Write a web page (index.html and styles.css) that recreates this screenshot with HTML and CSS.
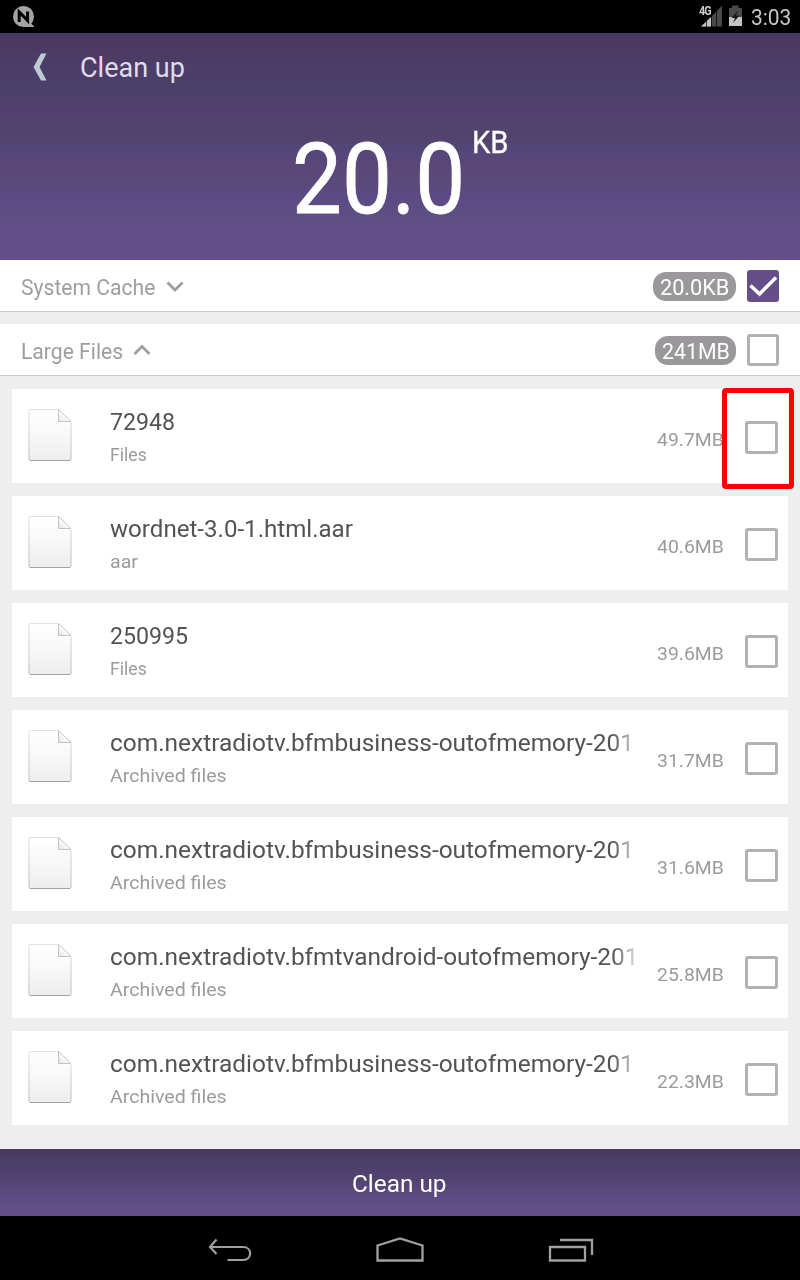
FILE: index.html
```
<!DOCTYPE html>
<html lang="en">
<head>
<meta charset="utf-8">
<title>Clean up</title>
<link rel="stylesheet" href="styles.css">
</head>
<body>
<svg class="defs" width="0" height="0">
  <defs>
    <linearGradient id="paper" x1="0" y1="0" x2="0" y2="1"><stop offset="0" stop-color="#fff"/><stop offset=".5" stop-color="#f9f8f9"/><stop offset="1" stop-color="#eeecee"/></linearGradient>
    <linearGradient id="edge" x1="0" y1="0" x2="0" y2="1"><stop offset="0" stop-color="#e3e2e3"/><stop offset="1" stop-color="#bdbbbd"/></linearGradient>
    <linearGradient id="fold" x1="0" y1="1" x2="1" y2="0"><stop offset="0" stop-color="#e2e0e2"/><stop offset=".5" stop-color="#fff"/></linearGradient>
    <symbol id="file" viewBox="0 0 46 54">
      <path d="M2 2.500Q2 1.500 3 1.500H31L44 14.500V51Q44 52.500 42.500 52.500H3.500Q2 52.500 2 51Z" fill="url(#paper)" stroke="url(#edge)"/>
      <path d="M3 52.500H43" stroke="#a3a1a3"/>
      <path d="M31.500 1.500V13.500H44Z" fill="url(#fold)" stroke="#c4c2c4"/>
    </symbol>
  </defs>
</svg>
<div class="status">
  <svg class="notify" width="24" height="24" viewBox="0 0 24 24"><circle cx="11.500" cy="11.500" r="10.500" fill="#a5a5a5"/><path d="M11 22H22.500L18 17Z" fill="#a5a5a5"/><path d="M7.200 17V7L15.600 15.500V6.500" fill="none" stroke="#000" stroke-width="3"/></svg>
  <div class="tray">
    <svg width="24" height="24" viewBox="0 0 24 24"><path d="M2 21.500 22 .5V21.500Z" fill="#484b47"/><path d="M1 21.500 11 12V21.500Z" fill="#c4c4c4"/><path d="M6.500 13V22M11.500 10V22M16.500 6V22" stroke="#000" stroke-width=".7"/></svg>
    <span class="net">4G</span>
    <svg class="battery" width="15" height="22" viewBox="0 0 15 22"><path d="M1 3H4V.5H10.500V3H14V12H1Z" fill="#484b47"/><path d="M1 12H14V21H1Z" fill="#c4c4c4"/><path d="M10 5.500 3.500 13H7L5 18 11.500 10.500H8Z" fill="#171a17"/></svg>
    <span class="t clock">3:03</span>
  </div>
</div>
<header class="hero">
  <div class="titlebar">
    <svg width="14" height="28" viewBox="0 0 14 28"><path d="M8 .5H13.500L6.500 14 13.500 27.500H8L.5 14Z" fill="#bdcbd2"/></svg>
    <h1 class="t title">Clean up</h1>
  </div>
  <div class="total"><span class="t amount">20.0</span><span class="t unit">KB</span></div>
</header>
<section class="group">
  <span class="label cache"><span class="t">System Cache</span></span>
  <svg class="chev" width="18" height="12" viewBox="0 0 18 12"><path d="M1.500 2.500 9 10 16.500 2.500" fill="none" stroke="#9e9e9e" stroke-width="2.800"/></svg>
  <span class="pill wide"><span class="t">20.0KB</span></span>
  <span class="box checked"><svg width="32" height="32" viewBox="0 0 32 32"><path d="M3.500 15.500 12.500 24 29 7.500" fill="none" stroke="#fff" stroke-width="3.500"/></svg></span>
</section>
<section class="group">
  <span class="label large"><span class="t">Large Files</span></span>
  <svg class="chev" width="18" height="12" viewBox="0 0 18 12"><path d="M1.500 10 9 2.500 16.500 10" fill="none" stroke="#9e9e9e" stroke-width="2.800"/></svg>
  <span class="pill"><span class="t">241MB</span></span>
  <span class="box"></span>
</section>
<main class="list">
  <article class="card"><svg class="doc"><use href="#file"/></svg><div class="info"><div class="name digits"><span class="t">72948</span></div><div class="kind short"><span class="t">Files</span></div></div><span class="size"><span class="t">49.7MB</span></span><span class="box"></span><div class="highlight"></div></article>
  <article class="card"><svg class="doc"><use href="#file"/></svg><div class="info"><div class="name"><span class="t">wordnet-3.0-1.html.aar</span></div><div class="kind"><span class="t">aar</span></div></div><span class="size"><span class="t">40.6MB</span></span><span class="box"></span></article>
  <article class="card"><svg class="doc"><use href="#file"/></svg><div class="info"><div class="name digits"><span class="t">250995</span></div><div class="kind short"><span class="t">Files</span></div></div><span class="size"><span class="t">39.6MB</span></span><span class="box"></span></article>
  <article class="card"><svg class="doc"><use href="#file"/></svg><div class="info"><div class="name fade"><span class="t">com.nextradiotv.bfmbusiness-outofmemory-201</span></div><div class="kind"><span class="t">Archived files</span></div></div><span class="size"><span class="t">31.7MB</span></span><span class="box"></span></article>
  <article class="card"><svg class="doc"><use href="#file"/></svg><div class="info"><div class="name fade"><span class="t">com.nextradiotv.bfmbusiness-outofmemory-201</span></div><div class="kind"><span class="t">Archived files</span></div></div><span class="size"><span class="t">31.6MB</span></span><span class="box"></span></article>
  <article class="card"><svg class="doc"><use href="#file"/></svg><div class="info"><div class="name fade"><span class="t">com.nextradiotv.bfmtvandroid-outofmemory-201</span></div><div class="kind"><span class="t">Archived files</span></div></div><span class="size"><span class="t">25.8MB</span></span><span class="box"></span></article>
  <article class="card"><svg class="doc"><use href="#file"/></svg><div class="info"><div class="name fade"><span class="t">com.nextradiotv.bfmbusiness-outofmemory-201</span></div><div class="kind"><span class="t">Archived files</span></div></div><span class="size"><span class="t">22.3MB</span></span><span class="box"></span></article>
</main>
<div class="action"><span class="t">Clean up</span></div>
<nav class="nav">
  <svg width="46" height="28" viewBox="0 0 46 28"><path d="M9.500 3.500 3 11 9.500 18M3.500 11H36C45.500 11 45.500 24 36 24H20.500" fill="none" stroke="#a0a0a0" stroke-width="2.200"/></svg>
  <svg width="50" height="28" viewBox="0 0 50 28"><path d="M2.500 24.500V9.500L25 2.500 47.500 9.500V24.500Z" fill="none" stroke="#a0a0a0" stroke-width="2.300"/></svg>
  <svg width="48" height="28" viewBox="0 0 48 28"><path d="M3 11H38V24.500H3ZM13 4H45V19" fill="none" stroke="#a0a0a0" stroke-width="2.300"/></svg>
</nav>
</body>
</html>
```
FILE: styles.css
```
:root { --purple: linear-gradient(#493966, #4c3a60 7%, #4b3e69 15%, #4b4069 26%, #52406f 34%, #52446e 47%, #534779 52%, #594778 58%, #5a4a7a 66%, #5c4a84 72%, #5c4e84 80%, #644e89 88%, #644f8c); }
* { box-sizing: border-box; }
body { margin: 0; width: 800px; height: 1280px; overflow: hidden; background: #eee; font-family: Roboto, sans-serif; display: flex; flex-direction: column; }
svg { display: block; flex: none; }
.defs { position: absolute; }
.t { display: inline-block; white-space: nowrap; transform-origin: 0 50%; }
.status { height: 33px; flex: none; background: #000; display: flex; justify-content: space-between; padding: 5px 8px 0 12px; }
.tray { display: flex; position: relative; width: 92px; }
.battery { margin-left: 4px; }
.net { position: absolute; left: -1px; top: -1px; color: #ccc; font: bold 12px/14px Roboto, sans-serif; letter-spacing: -1px; transform: scaleX(.9); transform-origin: 0 0; }
.clock { margin-left: 8px; color: #c6c6c6; font-size: 22px; line-height: 26px; transform: scaleX(.95); }
.hero { height: 227px; flex: none; background: var(--purple); color: #fff; }
.titlebar { display: flex; align-items: center; height: 68px; padding-left: 33px; }
.title { margin: 2px 0 0 33px; font-size: 27px; font-weight: 400; line-height: 32px; color: #e0dce6; }
.total { display: flex; padding: 18px 0 0 292px; }
.amount { width: 179px; font-size: 98px; line-height: 122px; transform: scaleX(.907); -webkit-text-stroke: .8px #fff; }
.unit { font-size: 31px; line-height: 36px; margin: 6px 0 0 1px; transform: scaleX(.94); -webkit-text-stroke: .3px #fff; }
.group { height: 52px; flex: none; background: #fff; border-bottom: 1px solid #cac6ca; display: flex; align-items: center; padding: 0 21px; margin-bottom: 12px; }
.label { font-size: 22px; line-height: 26px; padding-top: 4px; color: #9e9e9e; }
.label .t { transform: scaleX(.96); }
.cache { width: 145px; }
.large { width: 112px; }
.pill { margin-left: auto; margin-right: 11px; margin-top: 2px; width: 81px; height: 29px; border-radius: 13px; background: #9b989b; color: #fff; font-size: 22px; line-height: 31px; padding-left: 7px; }
.pill .t { transform: scaleX(.97); }
.wide .t { transform: scaleX(.985); }
.wide { width: 83px; }
.box { flex: none; width: 32px; height: 32px; border: 3px solid #b2b2b2; border-radius: 3px; background: #fff; }
.checked { border: 0; background: #654e8a; }
.list { display: flex; flex-direction: column; gap: 13px; padding: 1px 12px 0; height: 761px; flex: none; }
.card { position: relative; flex: none; height: 94px; background: #fff; display: flex; align-items: center; padding: 0 10px 0 15px; }
.doc { width: 46px; height: 54px; margin-top: -2px; }
.info { margin-left: 37px; width: 536px; padding-top: 2px; flex: none; }
.name { height: 32px; font-size: 24px; line-height: 30px; color: #535353; }
.name .t { transform: scaleX(1.004); }
.digits .t { transform: scaleX(.965); }
.fade .t { transform: scaleX(1.018); }
.fade { mask-image: linear-gradient(90deg, #000 502px, transparent 532px); }
.kind { height: 28px; font-size: 19px; line-height: 31px; color: #9b9b9b; }
.kind .t { transform: scaleX(1.036); }
.short .t { transform: scaleX(.93); }
.kind:not(.short) .t { transform: scaleX(1.03); }
.size { margin-left: 11px; width: 88px; flex: none; font-size: 19px; color: #9b9b9b; margin-top: 7px; }
.size .t { transform: scaleX(1.02); }
.card .box { margin-top: 3px; width: 33px; height: 33px; }
.highlight { position: absolute; left: 710px; top: -1px; width: 72px; height: 101px; border: 5px solid #fe0000; border-radius: 4px; }
.action { height: 67px; flex: none; background: var(--purple); color: #fff; display: flex; align-items: center; padding: 3px 0 0 352px; font-size: 24px; }
.action .t { transform: scaleX(1.015); }
.nav { height: 64px; flex: none; background: #000; display: flex; justify-content: space-between; align-items: center; padding: 3px 205px 0 207px; }
```
